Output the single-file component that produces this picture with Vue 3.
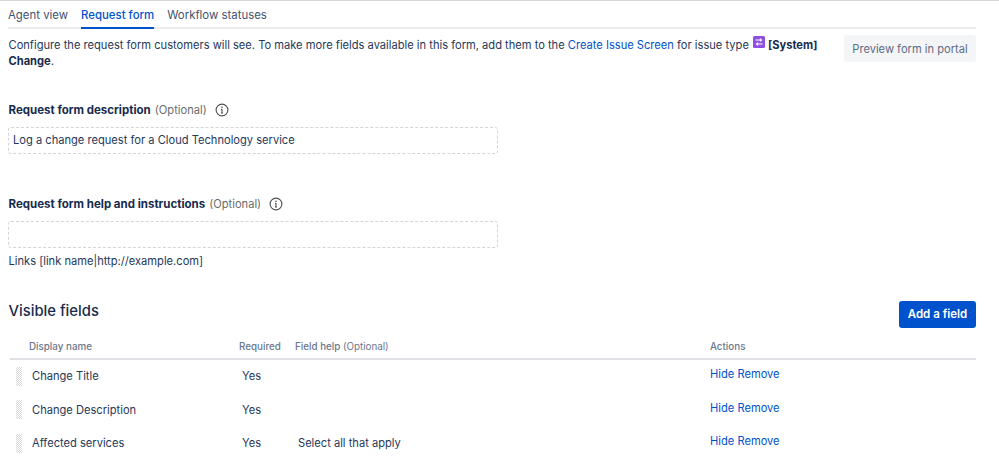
<script setup>
const fields = [
  { name: 'Change Title', required: 'Yes', help: '' },
  { name: 'Change Description', required: 'Yes', help: '' },
  { name: 'Affected services', required: 'Yes', help: 'Select all that apply' }
]
</script>

<template>
  <div class="page">
    <nav class="tabs">
      <a class="tab">Agent view</a>
      <a class="tab active">Request form</a>
      <a class="tab">Workflow statuses</a>
    </nav>

    <div class="intro">
      <p class="intro-text">
        Configure the request form customers will see. To make more fields available in this form, add them to the
        <a class="link">Create Issue Screen</a> for issue type
        <svg class="type-icon" width="12" height="12" viewBox="0 0 12 12">
          <rect width="12" height="12" rx="1.5" fill="#904ee2" />
          <path d="M2.5 4h6M7 2.6 8.6 4 7 5.4M9.5 8h-6M5 6.6 3.4 8 5 9.4" fill="none" stroke="#fff" stroke-width="1.1" />
        </svg>
        <b class="strong">[System] Change</b>.
      </p>
      <button class="preview">Preview form in portal</button>
    </div>

    <section class="block first">
      <div class="label">
        <b>Request form description</b> <span class="optional">(Optional)</span>
        <svg class="info" width="14" height="14" viewBox="0 0 14 14">
          <circle cx="7" cy="7" r="5.9" fill="none" stroke="#505050" stroke-width="1.1" />
          <path d="M7 6.3v3.6M6 6.4h1M6 10h2.1" fill="none" stroke="#505050" stroke-width="1.1" />
          <circle cx="7" cy="4.2" r=".8" fill="#505050" />
        </svg>
      </div>
      <div class="field">Log a change request for a Cloud Technology service</div>
    </section>

    <section class="block second">
      <div class="label">
        <b>Request form help and instructions</b> <span class="optional">(Optional)</span>
        <svg class="info" width="14" height="14" viewBox="0 0 14 14">
          <circle cx="7" cy="7" r="5.9" fill="none" stroke="#505050" stroke-width="1.1" />
          <path d="M7 6.3v3.6M6 6.4h1M6 10h2.1" fill="none" stroke="#505050" stroke-width="1.1" />
          <circle cx="7" cy="4.2" r=".8" fill="#505050" />
        </svg>
      </div>
      <div class="field"></div>
      <div class="hint">Links [link name|http://example.com]</div>
    </section>

    <div class="fields-head">
      <h2 class="title">Visible fields</h2>
      <button class="add">Add a field</button>
    </div>

    <div class="table">
      <div class="row head">
        <div class="h-name">Display name</div>
        <div>Required</div>
        <div>Field help <span class="h-opt">(Optional)</span></div>
        <div>Actions</div>
      </div>
      <div v-for="f in fields" :key="f.name" class="row item">
        <div class="name"><span class="grip"></span>{{ f.name }}</div>
        <div class="cell">{{ f.required }}</div>
        <div class="cell">{{ f.help }}</div>
        <div class="actions"><a class="link">Hide</a> <a class="link">Remove</a></div>
      </div>
    </div>
  </div>
</template>

<style scoped>
.page {
  box-sizing: border-box;
  width: 999px;
  height: 464px;
  overflow: hidden;
  padding: 0 23px 0 8px;
  border-top: 1px solid #d6d6d6;
  background: #fff;
  font-family: Inter, "Liberation Sans", sans-serif;
  font-size: 11.13px;
  color: #253858;
}
.tabs {
  display: flex;
  gap: 13px;
  box-sizing: border-box;
  height: 28px;
  border-bottom: 2px solid #ebecf0;
  font-size: 11.4px;
}
.tab {
  height: 28px;
  box-sizing: border-box;
  line-height: 28px;
  color: #42526e;
}
.tab.active {
  color: #0052cc;
  font-weight: 500;
  border-bottom: 2px solid #0052cc;
}
.intro {
  display: flex;
  justify-content: space-between;
  align-items: flex-start;
}
.intro-text {
  margin: 7px 0 0 0.5px;
  width: 820px;
  line-height: 16px;
}
.link { color: #0052cc; }
.strong { color: #172b4d; font-weight: 700; }
.type-icon { vertical-align: -0.5px; margin: 0 3px 1px 1px; }
.preview {
  margin-top: 6px;
  width: 132px;
  height: 27px;
  border: 0;
  border-radius: 3px;
  padding: 0;
  background: #f4f5f7;
  color: #5e6c84;
  font: inherit;
}
.block.first { margin-top: 32px; }
.block.second { margin-top: 41px; }
.label {
  display: flex;
  align-items: center;
  gap: 4px;
  height: 18px;
  padding-left: 0.5px;
  color: #172b4d;
}
.label b { font-size: 11.5px; font-weight: 700; color: #172b4d; }
.optional { color: #6b6b6b; }
.info { margin-left: 4px; }
.field {
  box-sizing: border-box;
  width: 490px;
  height: 27px;
  margin-top: 8px;
  padding-left: 4px;
  border: 1px dashed #d3d5da;
  border-radius: 3px;
  line-height: 24px;
}
.hint { margin-top: 5px; padding-left: 0.5px; line-height: 16px; }
.fields-head {
  display: flex;
  justify-content: space-between;
  align-items: center;
  margin-top: 32px;
  height: 27px;
}
.title {
  margin: 0 0 7px 0.5px;
  font-size: 14.8px;
  font-weight: 500;
  color: #172b4d;
}
.add {
  width: 77px;
  height: 27px;
  padding: 0;
  border: 0;
  border-radius: 3px;
  background: #0052cc;
  color: #fff;
  font: inherit;
  font-size: 11.5px;
  font-weight: 600;
}
.table { margin: 10px 0 0 2px; }
.row {
  display: grid;
  grid-template-columns: 229px 56px 415px 1fr;
}
.head {
  height: 20px;
  border-bottom: 2px solid #dfe1e6;
  font-size: 9.8px;
  font-weight: 500;
  line-height: 18px;
  color: #6b778c;
}
.h-name { padding-left: 19px; }
.h-opt { font-weight: 400; }
.item {
  height: 33.5px;
  align-items: center;
}
.name {
  display: flex;
  align-items: center;
  gap: 10px;
  padding-left: 6px;
}
.grip {
  width: 6px;
  height: 19px;
  background: repeating-conic-gradient(#d6d8dc 0 25%, #fff 0 50%) 0 0 / 2px 2px;
}
.cell { padding-left: 3px; }
.actions { margin-top: -4px; }
</style>
